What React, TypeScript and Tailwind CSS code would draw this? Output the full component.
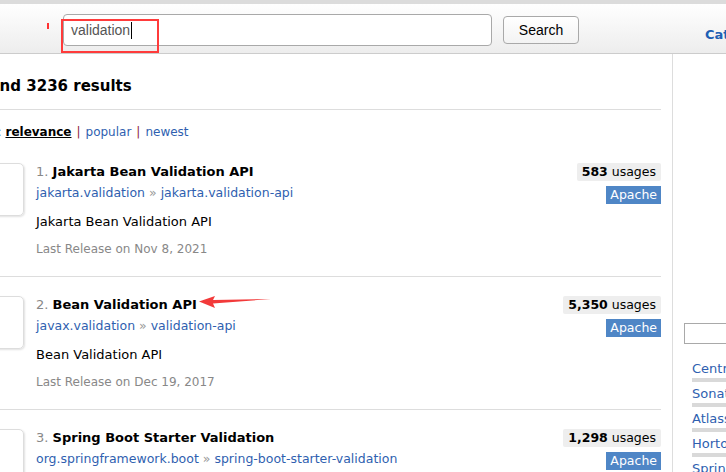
const results = [
  {
    n: 1,
    title: "Jakarta Bean Validation API",
    group: "jakarta.validation",
    artifact: "jakarta.validation-api",
    desc: "Jakarta Bean Validation API",
    release: "Nov 8, 2021",
    usages: "583",
  },
  {
    n: 2,
    title: "Bean Validation API",
    group: "javax.validation",
    artifact: "validation-api",
    desc: "Bean Validation API",
    release: "Dec 19, 2017",
    usages: "5,350",
    arrow: true,
  },
  {
    n: 3,
    title: "Spring Boot Starter Validation",
    group: "org.springframework.boot",
    artifact: "spring-boot-starter-validation",
    desc: "Starter for using Java Bean Validation with Hibernate Validator",
    release: "Dec 22, 2022",
    usages: "1,298",
  },
];

const repos = ["Central", "Sonatype", "Atlassian", "Hortonworks", "Spring Plugins"];

export default function App() {
  return (
    <div className="relative h-[472px] w-[726px] overflow-hidden bg-white font-['DejaVu_Sans',sans-serif] text-[13px] text-black">
      <div className="h-[4px] bg-[#dcdcdc]" />

      {/* header strip */}
      <header className="flex h-[50px] items-start overflow-hidden border-b border-[#cccccc] bg-gradient-to-b from-white to-[#ededed] font-['Liberation_Sans',Arial,sans-serif]">
        <span className="ml-[47px] mt-[19px] h-[6px] w-[2px] shrink-0 bg-[#ff3333]" />
        <div className="ml-[14px] mt-[10px] flex h-[32px] w-[429px] shrink-0 items-center rounded-[4px] border border-[#a9a9a9] bg-white pl-[7px] text-[14px] text-[#555]">
          validation
          <span className="ml-[1px] h-[17px] w-px bg-black" />
        </div>
        <button className="ml-[11px] mt-[12px] h-[28px] w-[76px] shrink-0 rounded-[4px] border border-[#a9a9a9] bg-gradient-to-b from-white to-[#f3f3f3] text-[14px] text-black">
          Search
        </button>
        <span className="ml-[126px] mt-[21px] shrink-0 whitespace-nowrap font-['DejaVu_Sans',sans-serif] text-[13px] font-bold text-[#1e5fb4]">
          Categories
        </span>
      </header>

      {/* annotation box around the query */}
      <div className="absolute left-[61px] top-[19px] h-[34px] w-[98px] border-2 border-[#ff3b3b]" />

      <div className="flex">
        <main className="w-[673px] shrink-0 border-r border-[#dddddd] pr-[11px]">
          <div className="-ml-[31px]">
            <h2 className="mt-[23px] text-[15px] font-bold leading-[18px]">Found 3236 results</h2>
            <div className="mt-[14px] border-b border-[#dddddd]" />
            <div className="ml-[4px] mt-[14px] text-[12px] leading-[16px]">
              <span className="text-[#333]">Sort: </span>
              <span className="font-bold text-black underline">relevance</span>
              <span className="mx-[5px] text-[#8b1a3b]">|</span>
              <span className="text-[#2f5fb0]">popular</span>
              <span className="mx-[5px] text-[#8b1a3b]">|</span>
              <span className="text-[#2f5fb0]">newest</span>
            </div>

            <div className="mt-[23px]">
              {results.map((r) => (
                <div key={r.n} className="flex border-b border-[#dddddd] pb-[18px] pt-[19px] first:pt-0">
                  <div className="h-[53px] w-[55px] shrink-0 rounded-[5px] border border-[#dddddd] shadow-[1px_1px_2px_rgba(0,0,0,0.12)]" />
                  <div className="ml-[12px] min-w-0 flex-1">
                    <div className="relative flex h-[17px] items-center text-[13px] leading-[17px]">
                      <span className="text-[#888]">{r.n}.&nbsp;</span>
                      <span className="font-bold">{r.title}</span>
                      {r.arrow && (
                        <svg className="ml-[2px] mt-[-6px]" width="72" height="12" viewBox="0 0 72 12">
                          <path d="M0 5.5 L16 0 L14 4 L72 3 L14 7.5 L16 12 Z" fill="#f23a3a" />
                        </svg>
                      )}
                    </div>
                    <div className="mt-[4px] h-[17px] text-[12.5px] leading-[17px] text-[#2f5fb0]">
                      {r.group}
                      <span className="text-[#999]"> » </span>
                      {r.artifact}
                    </div>
                    <div className="mt-[12px] h-[17px] text-[13px] leading-[17px]">{r.desc}</div>
                    <div className="mt-[11px] h-[17px] text-[12px] leading-[17px] text-[#888]">
                      Last Release on {r.release}
                    </div>
                  </div>
                  <div className="flex shrink-0 flex-col items-end">
                    <div className="flex h-[18px] items-center rounded-[2px] bg-[#eeeeee] px-[5px] text-[12.5px]">
                      <b>{r.usages}</b>&nbsp;usages
                    </div>
                    <div className="mt-[5px] flex h-[18px] items-center bg-[#4f86c6] px-[4px] text-[12.5px] text-white">
                      Apache
                    </div>
                  </div>
                </div>
              ))}
            </div>
          </div>
        </main>

        <aside className="flex-1 pl-[11px]">
          <div className="mt-[269px] h-[21px] w-[60px] border border-[#a9a9a9] bg-white" />
          <ul className="mt-[16px] pl-[8px] text-[13px] leading-[18px]">
            {repos.map((name) => (
              <li key={name} className="mb-[3px] whitespace-nowrap">
                <span className="text-[#2f5fb0]">{name}</span>
                <div className="h-[4px] w-[60px] bg-[#d9d9d9]" />
              </li>
            ))}
          </ul>
        </aside>
      </div>
    </div>
  );
}
